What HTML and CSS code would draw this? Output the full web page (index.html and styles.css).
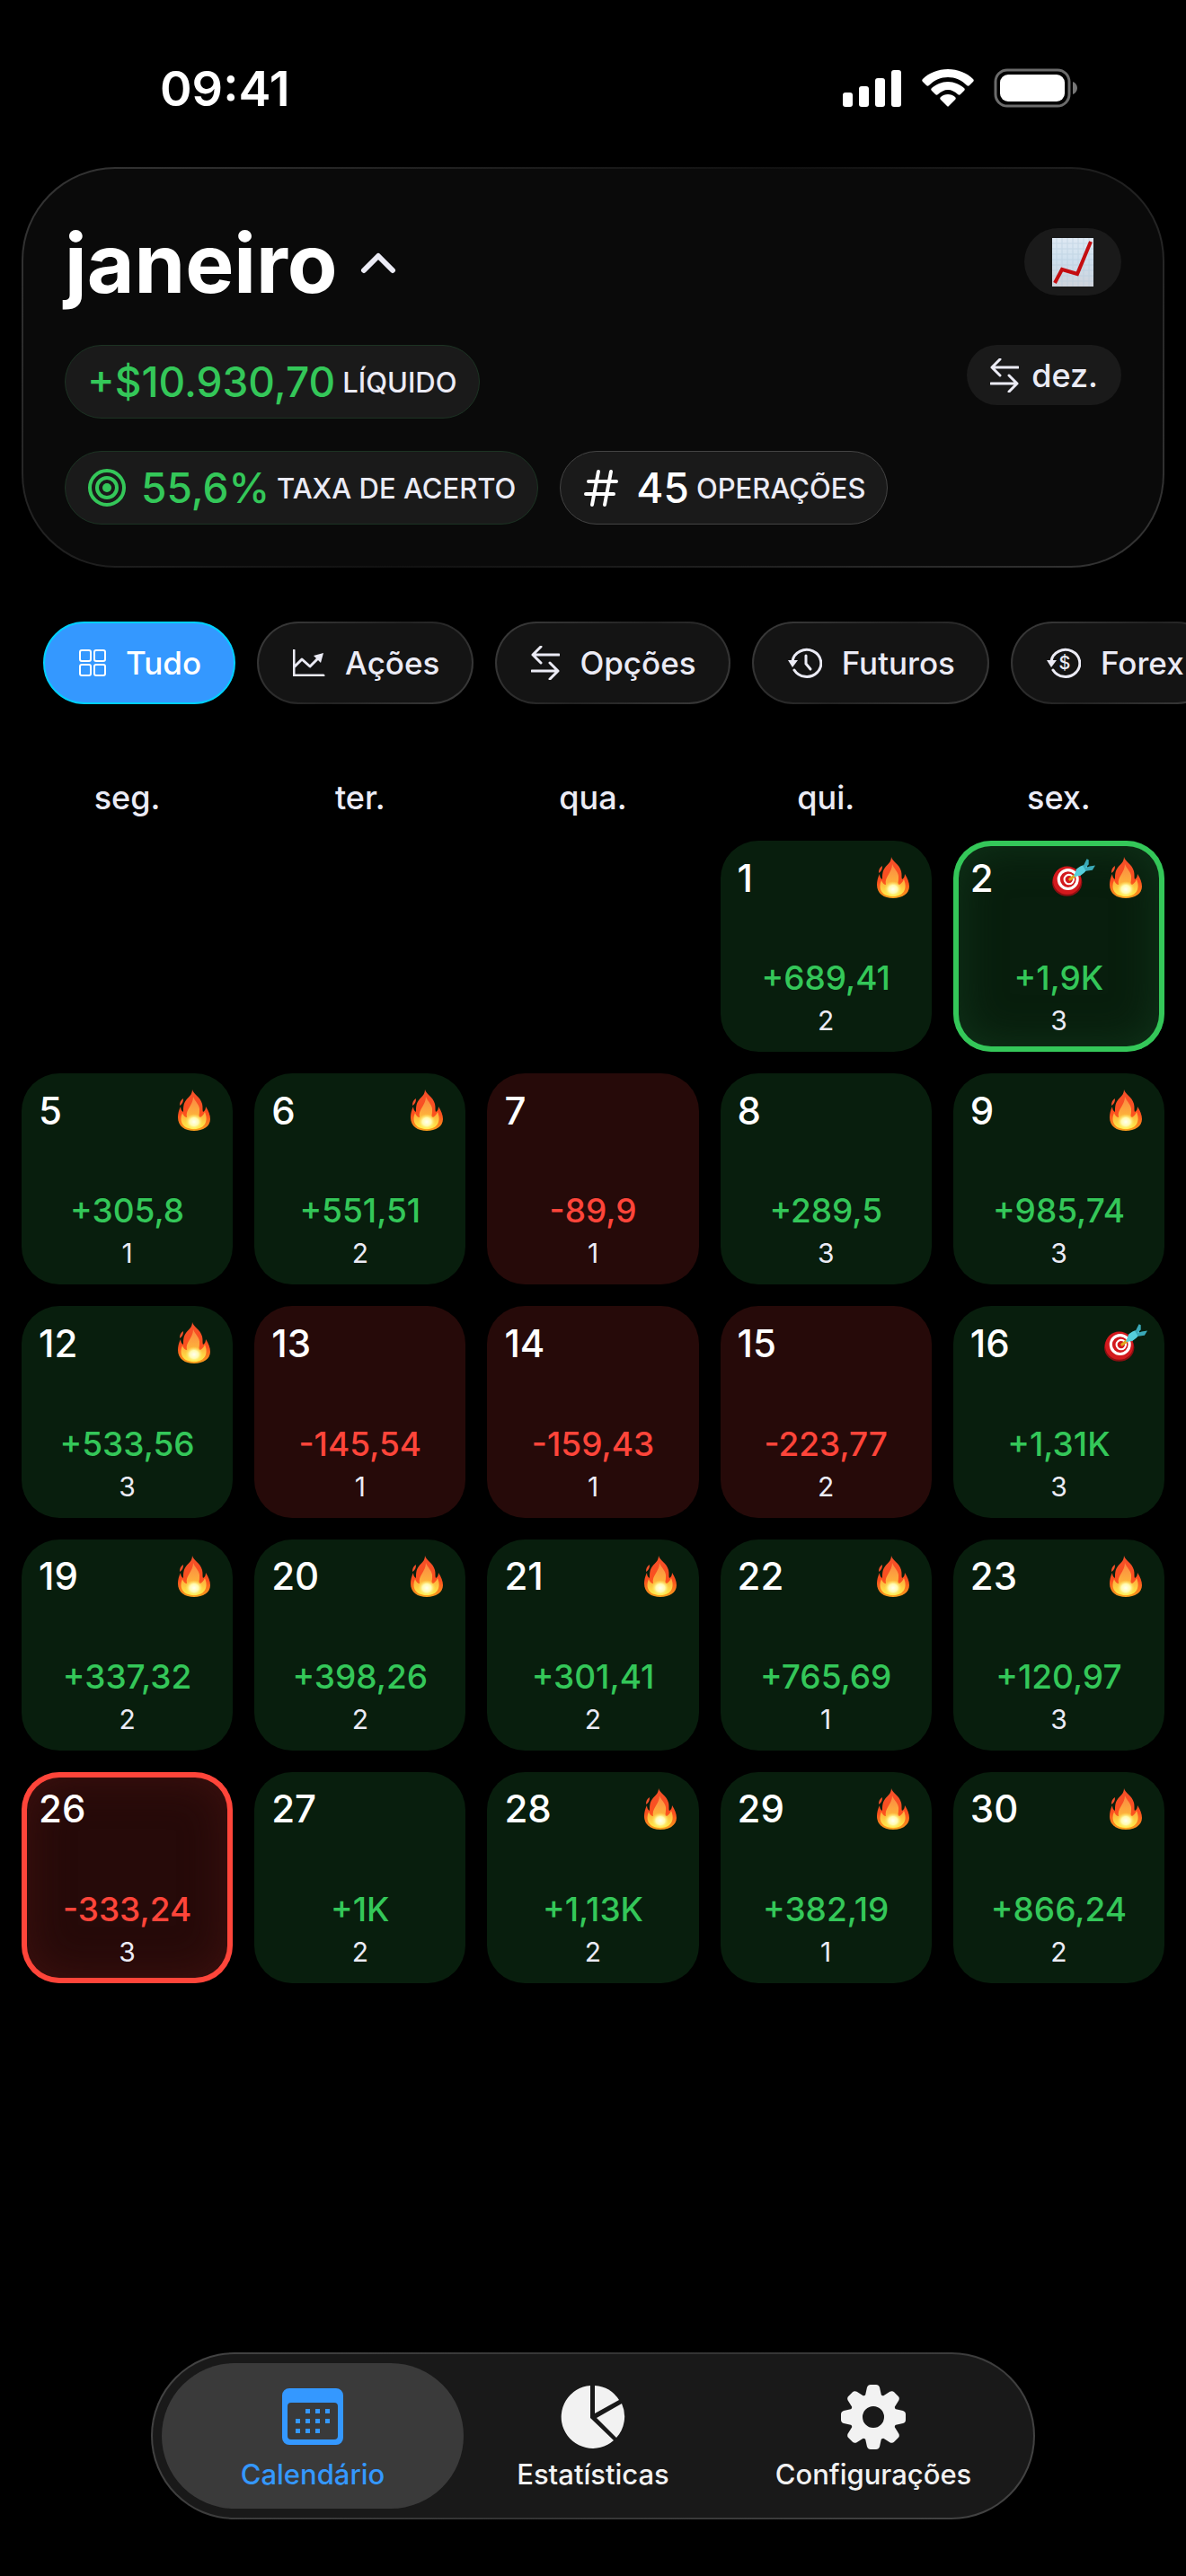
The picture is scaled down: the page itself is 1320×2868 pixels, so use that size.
FILE: index.html
```html
<!DOCTYPE html>
<html lang="pt-BR">
<head>
    <meta charset="UTF-8">
    <meta name="viewport" content="width=device-width, initial-scale=1.0">
    <title>Calendário</title>
    <link rel="stylesheet" href="styles.css">
</head>
<body>

    <!-- shared icons -->
    <svg class="sprite" aria-hidden="true">
        <defs>
            <linearGradient id="flame-outer" x1="0" y1="0" x2="0" y2="1">
                <stop offset="0" stop-color="#f4502a"/>
                <stop offset="0.6" stop-color="#fb4f1e"/>
                <stop offset="1" stop-color="#f9a01c"/>
            </linearGradient>
            <linearGradient id="flame-mid" x1="0" y1="0" x2="0" y2="1">
                <stop offset="0" stop-color="#fb8643"/>
                <stop offset="0.55" stop-color="#fdb03c"/>
                <stop offset="1" stop-color="#fff04a"/>
            </linearGradient>
            <radialGradient id="flame-core">
                <stop offset="0" stop-color="#fffef0"/>
                <stop offset="0.5" stop-color="#fffbb0"/>
                <stop offset="1" stop-color="#ffe34a" stop-opacity="0"/>
            </radialGradient>
            <linearGradient id="paper" x1="0" y1="0" x2="0" y2="1">
                <stop offset="0" stop-color="#dfe9f3"/>
                <stop offset="0.45" stop-color="#cfe0ee"/>
                <stop offset="1" stop-color="#ced3db"/>
            </linearGradient>
        </defs>
        <symbol id="fire" viewBox="0 0 36 46">
            <path fill="url(#flame-outer)" d="M16 0c1 5 9 8 11 16 1 4 0 7 1 9 2-1 3-3 3-6 3 5 5 9 5 14 0 8-8 13-18 13S0 41 0 31c0-4 1-8 3-12 0 3 1 5 3 6 0-5 0-9 3-13 3-4 7-6 7-12z"/>
            <path fill="#f4502a" d="M6 10c0 4-1 6-4 8 0-4 1-6 4-8z"/>
            <path fill="url(#flame-mid)" d="M17 8c2 6 8 9 7 16 0 4-1 5 0 7 2 0 4-2 6-6 4 9 1 19-12 19S1 35 5 26c1 3 3 5 5 5-2-9 7-13 7-23z"/>
            <ellipse cx="18" cy="36" rx="10" ry="9" fill="url(#flame-core)"/>
        </symbol>
        <symbol id="dart" viewBox="0 0 46 40">
            <ellipse cx="16" cy="25" rx="16" ry="15" fill="#8c0f12"/>
            <ellipse cx="16" cy="23" rx="15" ry="15" fill="#d3191d"/>
            <ellipse cx="17" cy="22" rx="10" ry="10" fill="none" stroke="#fff" stroke-width="3"/>
            <ellipse cx="18" cy="22" rx="5" ry="5" fill="none" stroke="#fff" stroke-width="2"/>
            <path d="M19 22l5-4" stroke="#e0a81c" stroke-width="3" stroke-linecap="round"/>
            <path fill="#55cfdc" d="M23 19l3-8c3-3 7-5 11-4l1 3c-2 4-5 6-8 8z"/>
            <path fill="#3aa9b8" d="M33 8l4-8 2 1v5l-4 4 5-2 6-1-3 5-7 1z"/>
        </symbol>
        <symbol id="swap" viewBox="0 0 32 38">
            <path d="M31 10H2M11 1L2 10l9 9M1 28h29M21 19l9 9-9 9" fill="none" stroke="currentColor" stroke-width="3" stroke-linecap="round" stroke-linejoin="round"/>
        </symbol>
    </svg>

    <div class="status-bar">
        <time class="clock">09:41</time>
        <div class="status-icons">
            <svg width="66" height="42" viewBox="0 0 66 42" fill="#fff" aria-label="Sinal">
                <rect x="0" y="26" width="11" height="16" rx="3"/>
                <rect x="18" y="19" width="11" height="23" rx="3"/>
                <rect x="36" y="10" width="11" height="32" rx="3"/>
                <rect x="54" y="1" width="11" height="41" rx="3"/>
            </svg>
            <svg width="58" height="42" viewBox="0 0 58 42" fill="#fff" aria-label="Wi-Fi">
                <path d="M29 0c11 0 21 4 28 11 1 1 1 2 0 3l-4 4c-1 1-2 1-3 0-6-6-13-9-21-9S14 12 8 18c-1 1-2 1-3 0l-4-4c-1-1-1-2 0-3C8 4 18 0 29 0z"/>
                <path d="M29 14c7 0 13 3 18 7 1 1 1 2 0 3l-4 4c-1 1-2 1-3 0-3-3-7-5-11-5s-8 2-11 5c-1 1-2 1-3 0l-4-4c-1-1-1-2 0-3 5-4 11-7 18-7z"/>
                <path d="M29 28c3 0 6 1 8 3 1 1 1 2 0 3l-7 7c-1 1-1 1-2 0l-7-7c-1-1-1-2 0-3 2-2 5-3 8-3z"/>
            </svg>
            <svg width="94" height="44" viewBox="0 0 94 44" aria-label="Bateria">
                <rect x="2" y="2" width="82" height="40" rx="13" fill="none" stroke="#6b6b6b" stroke-width="3"/>
                <rect x="7" y="7" width="72" height="30" rx="9" fill="#fff"/>
                <path d="M88 15c3 1 5 4 5 7s-2 6-5 7z" fill="#767676"/>
            </svg>
        </div>
    </div>

    <main>
        <section class="summary">
            <div class="summary-row title-row">
                <button type="button" class="month">
                    janeiro
                    <svg width="40" height="26" viewBox="0 0 40 26" aria-hidden="true"><path d="M4 21L20 5l16 16" fill="none" stroke="#ebebf5" stroke-width="6" stroke-linecap="round" stroke-linejoin="round"/></svg>
                </button>
                <button type="button" class="mini mini-chart" aria-label="Gráfico">
                    <svg width="46" height="54" viewBox="0 0 46 54" aria-hidden="true">
                        <rect width="46" height="54" fill="url(#paper)"/>
                        <path d="M5 0v54M11 0v54M17 0v54M23 0v54M29 0v54M35 0v54M41 0v54M0 6h46M0 12h46M0 18h46M0 24h46M0 30h46M0 36h46M0 42h46M0 48h46" stroke="#b4cbdc" stroke-width="1" opacity="0.5"/>
                        <path d="M3 50l8-15 17 5L43 4" fill="none" stroke="#c40d10" stroke-width="4"/>
                    </svg>
                </button>
            </div>
            <div class="summary-row">
                <div class="chip chip-green"><strong>+$10.930,70</strong><span>LÍQUIDO</span></div>
                <button type="button" class="mini">
                    <svg width="32" height="38" aria-hidden="true"><use href="#swap"/></svg>
                    dez.
                </button>
            </div>
            <div class="summary-row chips">
                <div class="chip chip-green">
                    <svg width="44" height="44" viewBox="0 0 44 44" fill="none" stroke="currentColor" stroke-width="4" aria-hidden="true">
                        <circle cx="22" cy="22" r="19"/>
                        <circle cx="22" cy="22" r="11"/>
                        <circle cx="22" cy="22" r="5" fill="currentColor" stroke="none"/>
                    </svg>
                    <strong>55,6%</strong><span>TAXA DE ACERTO</span>
                </div>
                <div class="chip">
                    <svg width="44" height="44" viewBox="0 0 44 44" aria-hidden="true"><path d="M18 4l-7 37M32 4l-7 37M7 15h31M4 29h31" fill="none" stroke="currentColor" stroke-width="4" stroke-linecap="round"/></svg>
                    <strong>45</strong><span>OPERAÇÕES</span>
                </div>
            </div>
        </section>

        <nav class="filters">
            <button type="button" class="filter active">
                <svg width="30" height="30" viewBox="0 0 30 30" fill="none" stroke="currentColor" stroke-width="2" aria-hidden="true">
                    <rect x="1" y="1" width="12" height="12" rx="2"/>
                    <rect x="17" y="1" width="12" height="12" rx="2"/>
                    <rect x="1" y="17" width="12" height="12" rx="2"/>
                    <rect x="17" y="17" width="12" height="12" rx="2"/>
                </svg>
                Tudo
            </button>
            <button type="button" class="filter">
                <svg width="36" height="30" viewBox="0 0 36 30" aria-hidden="true">
                    <path d="M1 1v28h33M1 20l9-9 9 8L30 8" fill="none" stroke="currentColor" stroke-width="3" stroke-linecap="round" stroke-linejoin="round"/>
                    <path d="M23 7l11-3-3 11z" fill="currentColor"/>
                </svg>
                Ações
            </button>
            <button type="button" class="filter">
                <svg width="32" height="38" aria-hidden="true"><use href="#swap"/></svg>
                Opções
            </button>
            <button type="button" class="filter">
                <svg width="38" height="34" viewBox="0 0 38 34" aria-hidden="true">
                    <path d="M5 15A16 15 0 1 1 7 25" fill="none" stroke="currentColor" stroke-width="3" stroke-linecap="round"/>
                    <path d="M0 14h11l-6 8z" fill="currentColor"/>
                    <path d="M20 9v9l5 6" fill="none" stroke="currentColor" stroke-width="3" stroke-linecap="round"/>
                </svg>
                Futuros
            </button>
            <button type="button" class="filter">
                <svg width="38" height="34" viewBox="0 0 38 34" aria-hidden="true">
                    <path d="M5 15A16 15 0 1 1 7 25" fill="none" stroke="currentColor" stroke-width="3" stroke-linecap="round"/>
                    <path d="M0 14h11l-6 8z" fill="currentColor"/>
                    <text x="20" y="24" text-anchor="middle" class="coin">$</text>
                </svg>
                Forex
            </button>
        </nav>

        <div class="weekdays">
            <span>seg.</span><span>ter.</span><span>qua.</span><span>qui.</span><span>sex.</span>
        </div>

        <div class="calendar">
            <button type="button" class="day win first">
                <span class="top">1 <svg><use href="#fire"/></svg></span>
                <span class="amount">+689,41</span><span class="count">2</span>
            </button>
            <button type="button" class="day win best">
                <span class="top">2 <svg><use href="#dart" class="dart"/></svg><svg><use href="#fire"/></svg></span>
                <span class="amount">+1,9K</span><span class="count">3</span>
            </button>

            <button type="button" class="day win">
                <span class="top">5 <svg><use href="#fire"/></svg></span>
                <span class="amount">+305,8</span><span class="count">1</span>
            </button>
            <button type="button" class="day win">
                <span class="top">6 <svg><use href="#fire"/></svg></span>
                <span class="amount">+551,51</span><span class="count">2</span>
            </button>
            <button type="button" class="day loss">
                <span class="top">7</span>
                <span class="amount">-89,9</span><span class="count">1</span>
            </button>
            <button type="button" class="day win">
                <span class="top">8</span>
                <span class="amount">+289,5</span><span class="count">3</span>
            </button>
            <button type="button" class="day win">
                <span class="top">9 <svg><use href="#fire"/></svg></span>
                <span class="amount">+985,74</span><span class="count">3</span>
            </button>

            <button type="button" class="day win">
                <span class="top">12 <svg><use href="#fire"/></svg></span>
                <span class="amount">+533,56</span><span class="count">3</span>
            </button>
            <button type="button" class="day loss">
                <span class="top">13</span>
                <span class="amount">-145,54</span><span class="count">1</span>
            </button>
            <button type="button" class="day loss">
                <span class="top">14</span>
                <span class="amount">-159,43</span><span class="count">1</span>
            </button>
            <button type="button" class="day loss">
                <span class="top">15</span>
                <span class="amount">-223,77</span><span class="count">2</span>
            </button>
            <button type="button" class="day win">
                <span class="top">16 <svg><use href="#dart" class="dart"/></svg></span>
                <span class="amount">+1,31K</span><span class="count">3</span>
            </button>

            <button type="button" class="day win">
                <span class="top">19 <svg><use href="#fire"/></svg></span>
                <span class="amount">+337,32</span><span class="count">2</span>
            </button>
            <button type="button" class="day win">
                <span class="top">20 <svg><use href="#fire"/></svg></span>
                <span class="amount">+398,26</span><span class="count">2</span>
            </button>
            <button type="button" class="day win">
                <span class="top">21 <svg><use href="#fire"/></svg></span>
                <span class="amount">+301,41</span><span class="count">2</span>
            </button>
            <button type="button" class="day win">
                <span class="top">22 <svg><use href="#fire"/></svg></span>
                <span class="amount">+765,69</span><span class="count">1</span>
            </button>
            <button type="button" class="day win">
                <span class="top">23 <svg><use href="#fire"/></svg></span>
                <span class="amount">+120,97</span><span class="count">3</span>
            </button>

            <button type="button" class="day loss worst">
                <span class="top">26</span>
                <span class="amount">-333,24</span><span class="count">3</span>
            </button>
            <button type="button" class="day win">
                <span class="top">27</span>
                <span class="amount">+1K</span><span class="count">2</span>
            </button>
            <button type="button" class="day win">
                <span class="top">28 <svg><use href="#fire"/></svg></span>
                <span class="amount">+1,13K</span><span class="count">2</span>
            </button>
            <button type="button" class="day win">
                <span class="top">29 <svg><use href="#fire"/></svg></span>
                <span class="amount">+382,19</span><span class="count">1</span>
            </button>
            <button type="button" class="day win">
                <span class="top">30 <svg><use href="#fire"/></svg></span>
                <span class="amount">+866,24</span><span class="count">2</span>
            </button>
        </div>
    </main>

    <nav class="tab-bar">
        <a href="#calendario" class="tab current">
            <svg width="72" height="72" viewBox="0 0 72 72" fill="currentColor" aria-hidden="true">
                <path fill-rule="evenodd" d="M10 4h52a8 8 0 0 1 8 8v47a8 8 0 0 1-8 8H10a8 8 0 0 1-8-8V12a8 8 0 0 1 8-8zM12 20a4 4 0 0 0-4 4v33a4 4 0 0 0 4 4h48a4 4 0 0 0 4-4V24a4 4 0 0 0-4-4z"/>
                <path d="M28 27h5v5h-5zM39 27h5v5h-5zM50 27h5v5h-5zM17 38h5v5h-5zM28 38h5v5h-5zM39 38h5v5h-5zM50 38h5v5h-5zM17 49h5v5h-5zM28 49h5v5h-5zM39 49h5v5h-5z"/>
            </svg>
            Calendário
        </a>
        <a href="#estatisticas" class="tab">
            <svg width="72" height="72" viewBox="0 0 72 72" fill="currentColor" aria-hidden="true">
                <path d="M33 1A35 35 0 1 0 59 62L33 37z"/>
                <path d="M38 1A35 35 0 0 1 65 17L38 32z"/>
                <path d="M68 21A35 35 0 0 1 62 59L40 37z"/>
            </svg>
            Estatísticas
        </a>
        <a href="#configuracoes" class="tab">
            <svg width="72" height="72" viewBox="-36 -36 72 72" fill="currentColor" aria-hidden="true">
                <defs>
                    <path id="tooth" d="M-9-24l2-9q1-3 4-3h6q3 0 4 3l2 9z"/>
                </defs>
                <use href="#tooth"/>
                <use href="#tooth" transform="rotate(45)"/>
                <use href="#tooth" transform="rotate(90)"/>
                <use href="#tooth" transform="rotate(135)"/>
                <use href="#tooth" transform="rotate(180)"/>
                <use href="#tooth" transform="rotate(225)"/>
                <use href="#tooth" transform="rotate(270)"/>
                <use href="#tooth" transform="rotate(315)"/>
                <circle r="19" fill="none" stroke="currentColor" stroke-width="14"/>
            </svg>
            Configurações
        </a>
    </nav>

</body>
</html>
```
FILE: styles.css
```css
* { box-sizing: border-box; }
body { margin: 0; min-height: 100vh; display: flex; flex-direction: column; background: #000; color: #fff; font-family: Inter, "Liberation Sans", sans-serif; overflow-x: hidden; }
button { font: inherit; color: inherit; border: 0; padding: 0; background: none; cursor: pointer; }
svg { flex: none; display: block; }
.sprite { position: absolute; width: 0; height: 0; }

/* status bar */
.status-bar { display: flex; justify-content: space-between; align-items: center; height: 186px; padding: 10px 120px 0 178px; }
.clock { font-size: 54px; font-weight: 600; }
.status-icons { display: flex; align-items: center; gap: 22px; }

main { padding: 0 24px; }

/* summary card */
.summary { display: flex; flex-direction: column; gap: 36px; padding: 66px 46px 46px; border: 2px solid transparent; border-radius: 104px; background: linear-gradient(#0a0a0a, #0a0a0a) padding-box, linear-gradient(135deg, #363636, #222 25%, #111 50%, #222 75%, #363636) border-box; }
.summary-row { display: flex; justify-content: space-between; align-items: flex-start; }
.title-row { margin-bottom: 16px; }
.month { display: flex; align-items: center; gap: 25px; height: 78px; font-size: 91px; font-weight: 700; line-height: 78px; }
.chips { justify-content: flex-start; gap: 24px; }
.chip { display: flex; align-items: center; gap: 8px; height: 82px; padding: 0 24px; border: 1px solid #444; border-radius: 41px; background: #1a1a1a; }
.chip svg { margin-right: 8px; }
.chip strong { font-size: 46px; font-weight: 500; }
.chip span { font-size: 31px; font-weight: 500; color: #ebebf5; }
.chip-green { border-color: #1c3323; }
.chip-green strong, .chip-green svg { color: #34c759; }
.mini { display: flex; align-items: center; gap: 14px; height: 67px; padding: 0 26px; border-radius: 34px; background: #1a1a1a; color: #ebebf5; font-size: 36px; font-weight: 500; }
.mini-chart { height: 75px; padding: 0 31px; border-radius: 38px; }

/* filters */
.filters { display: flex; gap: 24px; margin: 60px -24px 0; padding: 0 24px; padding-left: 48px; overflow-x: auto; scrollbar-width: none; }
.filter { flex: none; display: flex; align-items: center; gap: 22px; height: 92px; padding: 0 36px 0 38px; border: 2px solid transparent; border-radius: 46px; color: #ebebf5; font-size: 35px; font-weight: 500; background: linear-gradient(#141414, #141414) padding-box, linear-gradient(135deg, #3c3c3c, #222 50%, #3c3c3c) border-box; }
.filter.active { color: #fff; background: #3498ff; border-color: #00d0ff; }
.coin { font-size: 20px; fill: currentColor; }

/* calendar */
.weekdays { display: grid; grid-template-columns: repeat(5, 1fr); gap: 24px; margin: 80px 0 24px; color: #ebebf5; font-size: 36px; font-weight: 500; line-height: 48px; text-align: center; }
.calendar { display: grid; grid-template-columns: repeat(5, 1fr); gap: 24px; }
.day { display: flex; flex-direction: column; align-items: center; aspect-ratio: 1; padding: 16px 19px 12px; border-radius: 42px; }
.first { grid-column: 4; }
.top { display: flex; align-items: center; gap: 10px; align-self: stretch; height: 50px; font-size: 42px; font-weight: 500; }
.top svg { width: 48px; height: 46px; }
.top svg:first-of-type { margin-left: auto; }
.dart { height: 40px; }
.amount { margin-top: auto; font-size: 37px; font-weight: 500; line-height: 48px; }
.count { font-size: 30px; line-height: 46px; color: #ebebf5; }
.win { background: #081e0d; }
.win .amount { color: #34c759; }
.loss { background: #260a09; }
.loss .amount { color: #ff453a; }
.best { box-shadow: inset 0 0 0 6px #34c759, inset 0 0 48px 6px #10341a; }
.worst { box-shadow: inset 0 0 0 6px #ff453a, inset 0 0 48px 6px #3e110f; }

/* bottom tabs */
.tab-bar { display: grid; grid-template-columns: 7fr 6fr 7fr; width: 984px; max-width: 100%; margin: auto auto 63px; padding: 10px; border: 2px solid transparent; border-radius: 93px; background: linear-gradient(#191919, #191919) padding-box, linear-gradient(135deg, #444, #333 50%, #444) border-box; }
.tab { display: flex; flex-direction: column; align-items: center; gap: 8px; height: 162px; padding-top: 24px; border-radius: 81px; color: #f2f2f2; font-size: 31px; font-weight: 500; line-height: 40px; text-decoration: none; }
.tab.current { background: #3a3a3a; color: #3498ff; }
```
